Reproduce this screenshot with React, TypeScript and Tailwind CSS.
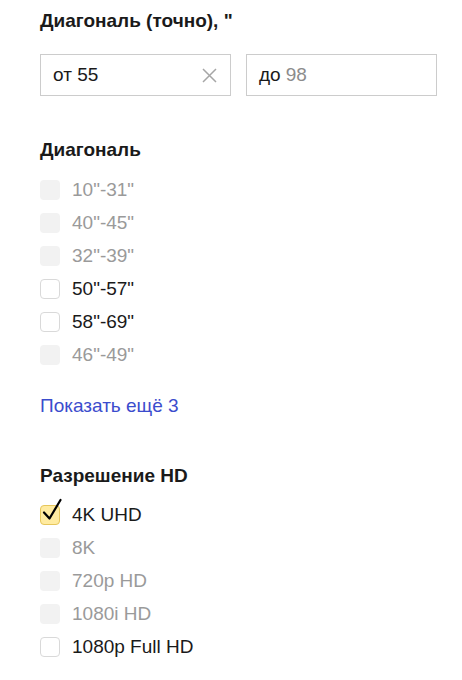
import React from "react";

type Option = { label: string; disabled?: boolean; checked?: boolean };

const diagonals: Option[] = [
  { label: '10"-31"', disabled: true },
  { label: '40"-45"', disabled: true },
  { label: '32"-39"', disabled: true },
  { label: '50"-57"' },
  { label: '58"-69"' },
  { label: '46"-49"', disabled: true },
];

const resolutions: Option[] = [
  { label: "4K UHD", checked: true },
  { label: "8K", disabled: true },
  { label: "720p HD", disabled: true },
  { label: "1080i HD", disabled: true },
  { label: "1080p Full HD" },
];

function Checkbox({ disabled, checked }: { disabled?: boolean; checked?: boolean }) {
  if (checked) {
    return (
      <span className="relative block w-5 h-5 rounded-[4px] bg-[#ffeba0] border border-[#e6c65c]">
        <svg
          className="absolute left-[1px] top-[-8px]"
          width="20"
          height="24"
          viewBox="0 0 20 24"
          fill="none"
        >
          <path d="M2 14.5 L7.5 20.5 L18.5 2" stroke="#000" strokeWidth="2.2" strokeLinecap="round" strokeLinejoin="round" />
        </svg>
      </span>
    );
  }
  if (disabled) {
    return <span className="block w-5 h-5 rounded-[4px] bg-[#f2f2f2]" />;
  }
  return <span className="block w-5 h-5 rounded-[4px] bg-white border border-[#d9d9d9]" />;
}

function Row({ label, disabled, checked }: Option) {
  return (
    <div className="flex items-center h-[33px] gap-3">
      <Checkbox disabled={disabled} checked={checked} />
      <span className={disabled ? "text-[#9a9a9a]" : "text-[#1a1a1a]"}>{label}</span>
    </div>
  );
}

export default function App() {
  return (
    <div
      className="w-[462px] h-[680px] bg-white pl-10 pr-[25px] pt-[9px] text-[19px] leading-6 text-[#1a1a1a] overflow-hidden"
      style={{ fontFamily: '"Liberation Sans", Arial, sans-serif' }}
    >
      <div className="font-bold h-6">Диагональ (точно), "</div>

      <div className="flex gap-[15px] mt-[21px]">
        <div className="flex items-center w-[191px] h-[42px] border border-[#cccccc] pl-3 pr-[13px]">
          <span className="flex-1">от 55</span>
          <svg width="15" height="15" viewBox="0 0 15 15">
            <path d="M1 1 L14 14 M14 1 L1 14" stroke="#a6a6a6" strokeWidth="1.5" />
          </svg>
        </div>
        <div className="flex items-center w-[191px] h-[42px] border border-[#cccccc] pl-3">
          <span>до</span>
          <span className="ml-[5px] text-[#8c8c8c]">98</span>
        </div>
      </div>

      <div className="font-bold h-6 mt-[42px]">Диагональ</div>
      <div className="mt-[11px] flex flex-col">
        {diagonals.map((o, i) => (
          <Row key={i} {...o} />
        ))}
      </div>

      <div className="mt-[23px] h-6 text-[#3b4ccd]">Показать ещё 3</div>

      <div className="font-bold h-6 mt-[46px]">Разрешение HD</div>
      <div className="mt-[10px] flex flex-col">
        {resolutions.map((o, i) => (
          <Row key={i} {...o} />
        ))}
      </div>
    </div>
  );
}
